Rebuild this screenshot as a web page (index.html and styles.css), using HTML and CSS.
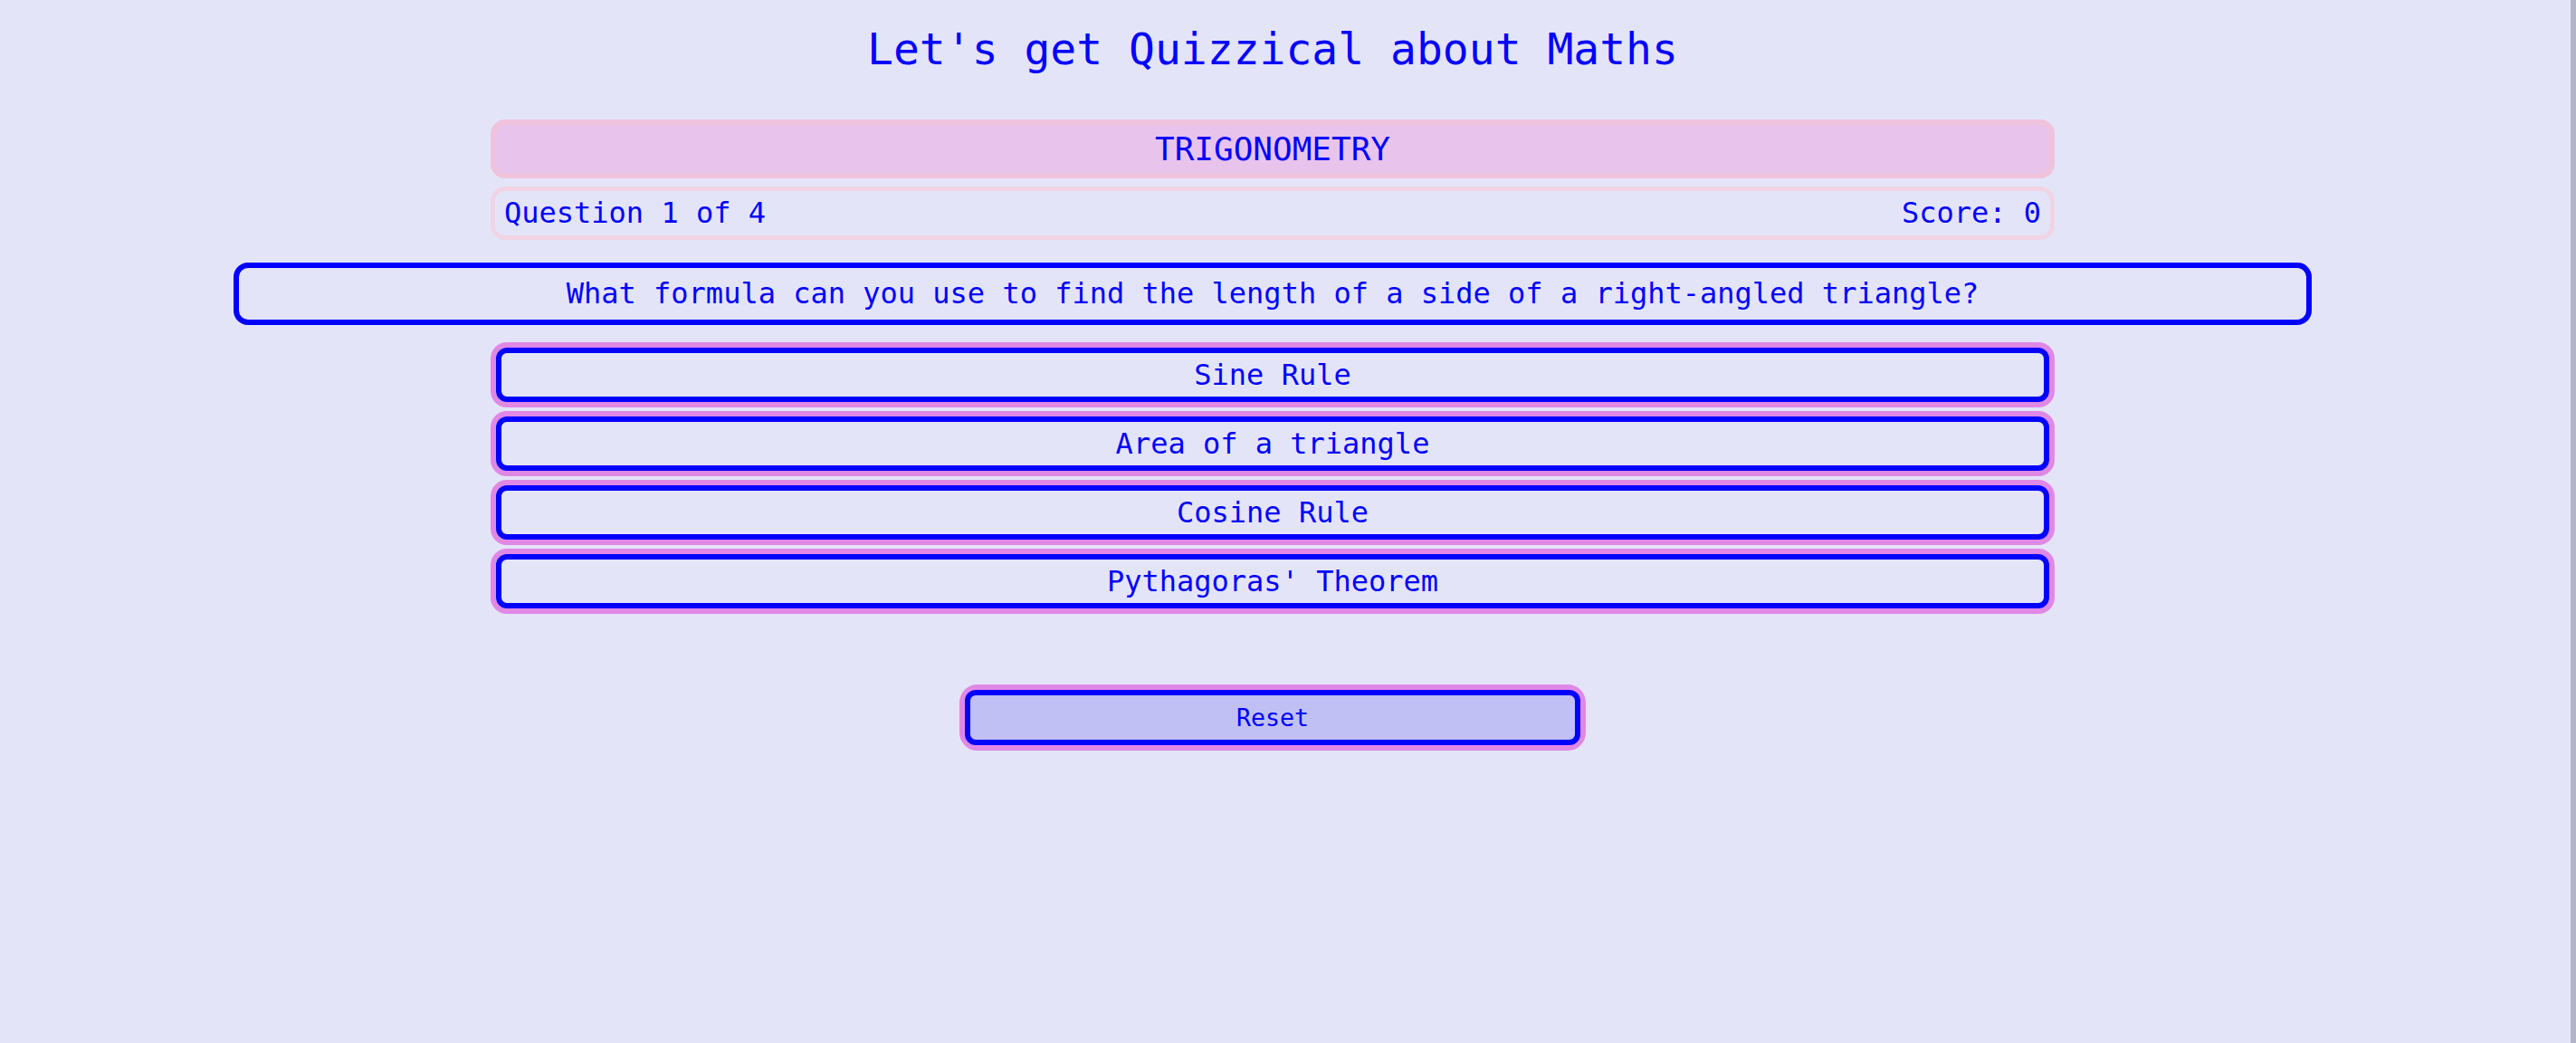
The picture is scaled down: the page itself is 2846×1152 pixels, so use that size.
FILE: index.html
```html
<!DOCTYPE html>
<html lang="en">
<head>
<meta charset="utf-8">
<title>Quizzical</title>
<link rel="stylesheet" href="styles.css">
</head>
<body>
<main class="page">
  <h1 class="title">Let's get Quizzical about Maths</h1>
  <div class="category">TRIGONOMETRY</div>
  <div class="status">
    <span>Question 1 of 4</span>
    <span>Score: 0</span>
  </div>
  <div class="question">What formula can you use to find the length of a side of a right-angled triangle?</div>
  <div class="options">
    <div class="ring"><button class="option">Sine Rule</button></div>
    <div class="ring"><button class="option">Area of a triangle</button></div>
    <div class="ring"><button class="option">Cosine Rule</button></div>
    <div class="ring"><button class="option">Pythagoras' Theorem</button></div>
  </div>
  <div class="ring reset-ring"><button class="reset">Reset</button></div>
</main>
<div class="gutter"></div>
</body>
</html>
```

FILE: styles.css
```css
html, body {
  margin: 0;
  padding: 0;
}

body {
  display: flex;
  min-height: 100vh;
  background: #e4e4f8;
  color: #0000ff;
  font-family: "DejaVu Sans Mono", "Liberation Mono", monospace;
}

.page {
  flex: 1;
  display: flex;
  flex-direction: column;
  align-items: center;
}

.gutter {
  width: 28px;
  border-right: 6px solid #b4b4c8;
}

.title {
  margin: 26px 0 0;
  font-size: 48px;
  line-height: 56px;
  font-weight: normal;
}

.category {
  margin-top: 50px;
  box-sizing: border-box;
  width: 1728px;
  height: 65px;
  border: 6px solid #efc3dc;
  border-radius: 16px;
  background: #e8c4ec;
  font-size: 36px;
  line-height: 53px;
  text-align: center;
}

.status {
  margin-top: 9px;
  box-sizing: border-box;
  width: 1728px;
  height: 59px;
  border: 5px solid #f0d4e4;
  border-radius: 16px;
  padding: 0 10px;
  display: flex;
  justify-content: space-between;
  font-size: 32px;
  line-height: 49px;
}

.question {
  margin-top: 25px;
  box-sizing: border-box;
  width: 2296px;
  height: 69px;
  border: 6px solid #0000ff;
  border-radius: 16px;
  font-size: 32px;
  line-height: 57px;
  text-align: center;
}

.options {
  margin-top: 19px;
  display: flex;
  flex-direction: column;
  gap: 4px;
}

.ring {
  box-sizing: border-box;
  width: 1728px;
  height: 72px;
  border: 6px solid #e088e6;
  border-radius: 18px;
  display: flex;
}

.option,
.reset {
  flex: 1;
  margin: 0;
  padding: 0;
  box-sizing: border-box;
  border: 6px solid #0000ff;
  border-radius: 12px;
  background: #e4e4f8;
  color: #0000ff;
  font-family: "DejaVu Sans Mono", "Liberation Mono", monospace;
  font-size: 32px;
  line-height: 48px;
  text-align: center;
}

.reset-ring {
  margin-top: 78px;
  width: 692px;
  height: 73px;
  border-radius: 20px;
}

.reset {
  background: #c0c0f4;
  font-size: 26.67px;
}
```
